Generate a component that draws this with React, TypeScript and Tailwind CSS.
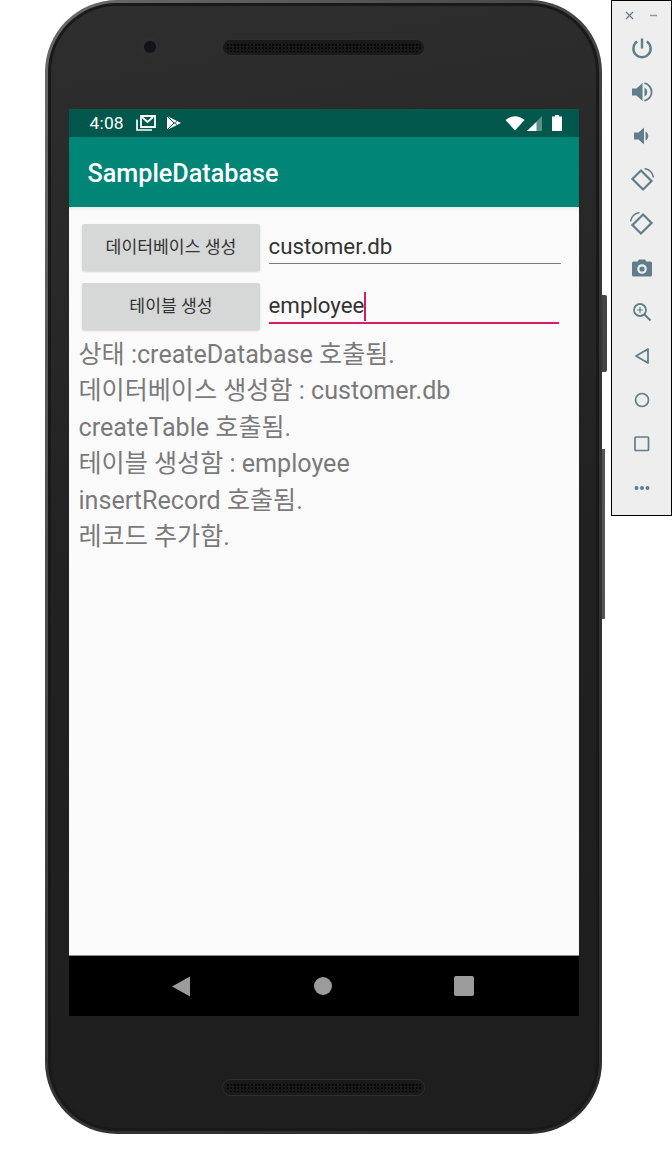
const FONT = "font-['Roboto','Noto_Sans_CJK_KR',sans-serif]";

function Speaker() {
  return (
    <div className="h-[17px] w-[203px] rounded-full bg-[#1a1a1a] border border-[#303030] p-[3px]">
      <div className="h-full w-full rounded-full bg-[radial-gradient(#000000_1.1px,transparent_1.3px)] bg-[length:3.5px_3.5px]" />
    </div>
  );
}

const ICON = "#607d8b";

function Toolbar() {
  return (
    <div className="absolute left-[611px] top-0 h-[516px] w-[61px] border border-black bg-[#eeeeee] flex flex-col items-center">
      <div className="mt-[10px] flex h-[9px] w-full items-center justify-between pl-[13px] pr-[13px]">
        <svg width="9" height="9" viewBox="0 0 9 9"><path d="M1 1l7 7M8 1l-7 7" stroke={ICON} strokeWidth="1.2" /></svg>
        <svg width="9" height="9" viewBox="0 0 9 9"><path d="M1 4.5h7" stroke={ICON} strokeWidth="1.4" opacity=".7" /></svg>
      </div>
      <div className="mt-[16px] flex flex-col items-center gap-[20px]">
        {/* power */}
        <svg width="24" height="24" viewBox="0 0 24 24" fill="none"><path d="M12 2.500v10" stroke={ICON} strokeWidth="2.4" /><path d="M7.200 5.500a8.600 8.600 0 1 0 9.600 0" stroke={ICON} strokeWidth="2.4" /></svg>
        {/* vol up */}
        <svg width="24" height="24" viewBox="0 0 24 24"><path d="M2 8.500h4.500L12.500 3v18l-6-5.500H2z" fill={ICON} /><path d="M14.500 7.500a5 5 0 0 1 0 9z" fill={ICON} /><path d="M14.500 3.200a9 9 0 0 1 0 17.600" fill="none" stroke={ICON} strokeWidth="1.8" /></svg>
        {/* vol down */}
        <svg width="24" height="24" viewBox="0 0 24 24"><path d="M4 8.500h4.500L14 3.500v17l-5.500-5H4z" fill={ICON} /><path d="M15.500 7.500a5 5 0 0 1 0 9z" fill={ICON} /></svg>
        {/* rotate left */}
        <svg width="24" height="24" viewBox="0 0 24 24" fill="none"><rect x="4.500" y="6" width="15" height="12" transform="rotate(45 12 12)" stroke={ICON} strokeWidth="2.2" /><path d="M14.500 0.500a11 11 0 0 1 9 9" stroke={ICON} strokeWidth="1.4" /></svg>
        {/* rotate right */}
        <svg width="24" height="24" viewBox="0 0 24 24" fill="none"><rect x="4.500" y="6" width="15" height="12" transform="rotate(-45 12 12)" stroke={ICON} strokeWidth="2.2" /><path d="M9.500 0.500a11 11 0 0 0-9 9" stroke={ICON} strokeWidth="1.4" /></svg>
        {/* camera */}
        <svg width="24" height="24" viewBox="0 0 24 24"><path d="M3.500 5.500h4L9 3.500h6l1.500 2h4a1.500 1.500 0 0 1 1.500 1.500v12a1.500 1.500 0 0 1-1.500 1.500h-17A1.500 1.500 0 0 1 2 19V7a1.500 1.500 0 0 1 1.500-1.500z" fill={ICON} /><circle cx="12" cy="13" r="4.800" fill="#eeeeee" /><circle cx="12" cy="13" r="2.600" fill={ICON} /></svg>
        {/* zoom */}
        <svg width="24" height="24" viewBox="0 0 24 24" fill="none"><circle cx="10" cy="10" r="6" stroke={ICON} strokeWidth="1.8" /><path d="M14.500 14.500L20.500 20.500" stroke={ICON} strokeWidth="2" /><path d="M10 7v6M7 10h6" stroke={ICON} strokeWidth="1.1" /></svg>
        {/* back */}
        <svg width="24" height="24" viewBox="0 0 24 24" fill="none"><path d="M18 5v14L6 12z" stroke={ICON} strokeWidth="1.8" strokeLinejoin="round" /></svg>
        {/* home */}
        <svg width="24" height="24" viewBox="0 0 24 24" fill="none"><circle cx="12" cy="12" r="6.500" stroke={ICON} strokeWidth="1.7" /></svg>
        {/* square */}
        <svg width="24" height="24" viewBox="0 0 24 24" fill="none"><rect x="5" y="5" width="13.500" height="13.500" rx=".8" stroke={ICON} strokeWidth="1.7" /></svg>
        {/* more */}
        <svg width="24" height="24" viewBox="0 0 24 24"><circle cx="6.500" cy="12" r="2" fill={ICON} /><circle cx="12" cy="12" r="2" fill={ICON} /><circle cx="17.500" cy="12" r="2" fill={ICON} /></svg>
      </div>
    </div>
  );
}

function StatusBar() {
  return (
    <div className="flex h-[28px] shrink-0 items-center bg-[#00574b] pl-[21px] pr-[17px] text-white">
      <span className="pt-[2px] text-[17.4px] leading-none tracking-[0.2px]">4:08</span>
      <svg className="ml-[12px]" width="20" height="17" viewBox="0 0 20 17" fill="none">
        <path d="M5 1h14v11H5z" stroke="#fff" strokeWidth="1.8" />
        <path d="M6 2l5.500 5L17 2" stroke="#fff" strokeWidth="2" />
        <path d="M1 4.500V15h15" stroke="#fff" strokeWidth="1.7" />
      </svg>
      <svg className="ml-[10px]" width="16" height="16" viewBox="0 0 16 16">
        <path d="M1 1l14 7L1 15z" fill="#fff" />
        <path d="M1 1l7 7-7 7" fill="none" stroke="#00574b" strokeWidth="1" />
        <path d="M8 8l3-1.500M8 8l3 1.500" fill="none" stroke="#00574b" strokeWidth=".8" />
      </svg>
      <div className="flex-1" />
      <svg width="20" height="15" viewBox="0 0 20 15"><path d="M0.500 4Q10-3.500 19.500 4L10 14.500z" fill="#fff" /></svg>
      <svg className="ml-[2px]" width="16" height="15" viewBox="0 0 16 15"><path d="M15 0v15H0z" fill="#fff" opacity=".35" /><path d="M9.500 6v9H0z" fill="#fff" /></svg>
      <svg className="ml-[9px]" width="10" height="16" viewBox="0 0 10 16"><path d="M3 0h4v1.500h3V16H0V1.500h3z" fill="#fff" /></svg>
    </div>
  );
}

function Row({ label, value, focused }: { label: string; value: string; focused?: boolean }) {
  return (
    <div className="flex items-start">
      <button className="ml-[13px] flex h-[47px] w-[178px] items-center justify-center rounded-[2px] bg-[#d6d7d7] pl-[1px] text-[17.2px] text-[#333333] shadow-[0_1px_2px_rgba(0,0,0,0.15)]">
        {label}
      </button>
      <div className={`ml-[9px] ${focused ? "h-[41px] w-[290px] border-b-2 border-[#d81b60]" : "h-[40px] w-[292px] border-b border-[#7a7a7a]"}`}>
        <div className="flex h-[39px] items-center pt-[7px] text-[22.3px] text-[#333333]">
          <span>{value}</span>
          {focused && <span className="h-[29px] w-[2px] bg-[#d81b60]" />}
        </div>
      </div>
    </div>
  );
}

function Screen() {
  const lines = [
    "상태 :createDatabase 호출됨.",
    "데이터베이스 생성함 : customer.db",
    "createTable 호출됨.",
    "테이블 생성함 : employee",
    "insertRecord 호출됨.",
    "레코드 추가함.",
  ];
  return (
    <div className="flex h-[907px] w-[510px] flex-col overflow-hidden">
      <StatusBar />
      <div className="flex h-[70px] shrink-0 items-center bg-[#008577] pl-[19px] pt-[3px] text-[25.2px] font-medium text-white">
        SampleDatabase
      </div>
      <div className="flex flex-1 flex-col bg-[#fafafa] pt-[17px] shadow-[inset_0_4px_4px_-3px_rgba(0,0,0,0.1)]">
        <div className="flex flex-col gap-[12px]">
          <Row label="데이터베이스 생성" value="customer.db" />
          <Row label="테이블 생성" value="employee" focused />
        </div>
        <div className="mt-[7px] pl-[10px] text-[25.1px] leading-[36.4px] text-[#7a7a7a]">
          {lines.map((l) => (
            <div key={l}>{l}</div>
          ))}
        </div>
      </div>
      <div className="flex h-[61px] shrink-0 items-center bg-black border-t border-[#8a8a8a]">
        <div className="ml-[102px]">
          <svg width="20" height="21" viewBox="0 0 20 21"><path d="M19 0.500v20L1 10.500z" fill="#9b9b9b" /></svg>
        </div>
        <div className="ml-[123px] h-[18px] w-[18px] rounded-full bg-[#9b9b9b]" />
        <div className="ml-[122px] h-[20px] w-[20px] rounded-[2px] bg-[#9b9b9b]" />
      </div>
    </div>
  );
}

export default function App() {
  return (
    <div className={`relative h-[1152px] w-[672px] overflow-hidden bg-white ${FONT}`}>
      {/* side buttons */}
      <div className="absolute left-[600px] top-[295px] h-[77px] w-[7px] rounded-r-[2px] bg-[#444444]" />
      <div className="absolute left-[600px] top-[449px] h-[170px] w-[5px] bg-[#555555]" />
      {/* phone body */}
      <div className="absolute left-[45px] top-0 h-[1134px] w-[557px] rounded-[72px] bg-[linear-gradient(125deg,#6a6a6a_0%,#4a4a4a_35%,#333333_60%,#2c2c2c_100%)] p-[3px]">
        <div className="h-full w-full rounded-[69px] bg-[#191919] p-[3px]">
          <div className="flex h-full w-full flex-col items-center rounded-[66px] bg-[linear-gradient(170deg,#2e2e2e_0%,#212121_50%,#1e1e1e_100%)]">
            <div className="relative mt-[33px] flex h-[17px] w-full justify-center">
              <div className="absolute left-[88px] top-[-3px] h-[22px] w-[22px] rounded-full bg-[#2e2e2e] p-[5px]">
                <div className="h-full w-full rounded-full bg-[#14121a]" />
              </div>
              <Speaker />
            </div>
            <div className="mt-[53px]">
              <Screen />
            </div>
            <div className="mt-[63px]">
              <Speaker />
            </div>
          </div>
        </div>
      </div>
      <Toolbar />
    </div>
  );
}
